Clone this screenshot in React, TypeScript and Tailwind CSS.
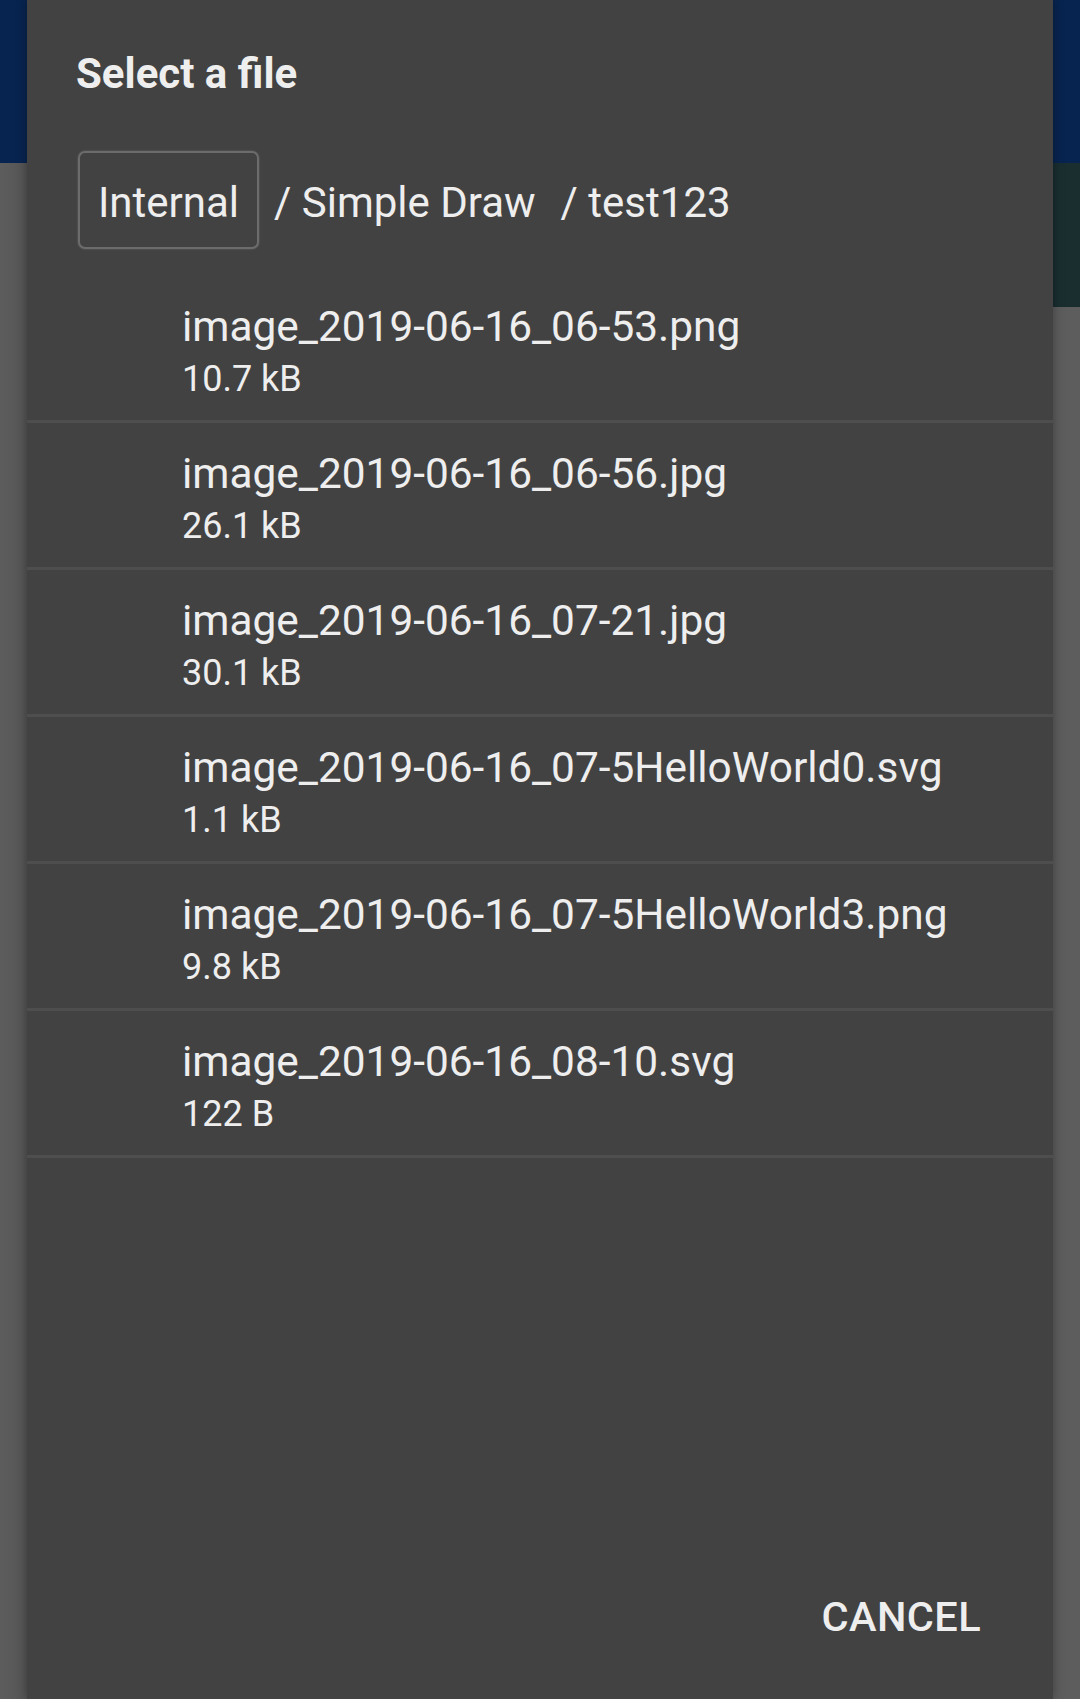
import React from "react";

const files = [
  { name: "image_2019-06-16_06-53.png", size: "10.7 kB" },
  { name: "image_2019-06-16_06-56.jpg", size: "26.1 kB" },
  { name: "image_2019-06-16_07-21.jpg", size: "30.1 kB" },
  { name: "image_2019-06-16_07-5HelloWorld0.svg", size: "1.1 kB" },
  { name: "image_2019-06-16_07-5HelloWorld3.png", size: "9.8 kB" },
  { name: "image_2019-06-16_08-10.svg", size: "122 B" },
];

export default function App() {
  return (
    <div
      className="flex w-[1080px] h-[1699px] overflow-hidden bg-[#5d5d5d] text-[#eeeeee]"
      style={{ fontFamily: "Roboto, 'Noto Sans', sans-serif" }}
    >
      {/* left backdrop */}
      <div className="flex flex-col w-[27px] shrink-0">
        <div className="h-[163px] bg-[#072450]" />
        <div className="flex-1 bg-gradient-to-r from-[#5d5d5d] to-[#555555]" />
      </div>

      {/* dialog */}
      <div className="relative z-10 flex flex-col w-[1026px] shrink-0 h-[1699px] bg-[#424242] shadow-[0_0_10px_rgba(0,0,0,0.35)]">
        <div className="pl-[49px] pt-[50px] text-[42px] leading-[48px] font-bold">
          Select a file
        </div>

        <div className="flex items-start mt-[53px] pl-[51px] text-[42px] leading-[48px]">
          <div className="flex justify-center w-[181px] h-[98px] pt-[26px] border-2 border-[#6c6c6c] rounded-[7px] shadow-[0_0_2px_rgba(150,150,150,0.5)]">
            Internal
          </div>
          <div className="ml-[15px] pt-[28px]">/ Simple Draw</div>
          <div className="ml-[25px] pt-[28px]">/ test123</div>
        </div>

        <div className="flex-1 mt-[27px]">
          {files.map((f) => (
            <div
              key={f.name}
              className="h-[147px] pt-[27px] pl-[155px] border-b-[3px] border-[#4e4e4e]"
            >
              <div className="text-[42.4px] leading-[48px]">{f.name}</div>
              <div className="mt-[4px] text-[36px] leading-[48px]">{f.size}</div>
            </div>
          ))}
        </div>

        <div className="flex justify-end pr-[72px] pb-[58px]">
          <div className="text-[41.5px] leading-[48px] font-medium tracking-[0.01em]">
            CANCEL
          </div>
        </div>
      </div>

      {/* right backdrop */}
      <div className="flex flex-col w-[27px] shrink-0">
        <div className="h-[163px] bg-[#072450]" />
        <div className="h-[144px] bg-[#1a2e30]" />
        <div className="flex-1 bg-[#5d5d5d]" />
      </div>
    </div>
  );
}
